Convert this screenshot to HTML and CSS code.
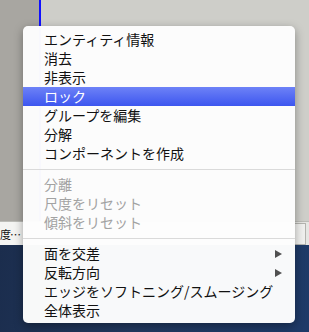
FILE: index.html
```html
<html>
	<head>
		<meta charset="UTF-8">
		<link rel="stylesheet" href="styles.css">
	</head>
	<body>
		<div class="desk">
			<div class="top">
				<div class="stone"></div>
				<div class="guide"></div>
				<div class="canvas"></div>
			</div>
			<div class="status">
				<div class="hint">度…</div>
				<div class="status-fill"></div>
				<div class="status-box"></div>
			</div>
			<div class="sea"></div>
		</div>
		<ul class="menu">
			<li>エンティティ情報</li>
			<li>消去</li>
			<li>非表示</li>
			<li class="sel">ロック</li>
			<li>グループを編集</li>
			<li>分解</li>
			<li>コンポーネントを作成</li>
			<li class="sep"></li>
			<li class="off">分離</li>
			<li class="off">尺度をリセット</li>
			<li class="off">傾斜をリセット</li>
			<li class="sep"></li>
			<li>面を交差<span class="arrow"></span></li>
			<li>反転方向<span class="arrow"></span></li>
			<li>エッジをソフトニング/スムージング</li>
			<li>全体表示</li>
		</ul>
	</body>
</html>
```

FILE: styles.css
```css
body {
	margin: 0;
	width: 309px;
	height: 332px;
	overflow: hidden;
	font-family: "Noto Sans CJK JP", "Noto Sans", sans-serif;
}
.desk {
	display: flex;
	flex-direction: column;
	height: 332px;
}
.top {
	display: flex;
	height: 221px;
}
.stone {
	width: 39px;
	background: #a8a6a1;
}
.guide {
	width: 2px;
	background: #1010ff;
}
.canvas {
	flex: 1;
	background: #cecec9;
}
.status {
	display: flex;
	height: 24px;
	background: #e6e6e3;
	border-top: 1px solid #bcbcb7;
	box-sizing: border-box;
}
.hint {
	width: 23px;
	display: flex;
	align-items: center;
	background: #f4f4f2;
	font-size: 11px;
	color: #111;
	white-space: nowrap;
	letter-spacing: -1px;
}
.status-fill {
	flex: 1;
}
.status-box {
	width: 10px;
	margin: 1px 3px 0 0;
	background: #f0f0ee;
	border: 1px solid #b4b4af;
}
.sea {
	flex: 1;
	background: linear-gradient(100deg, #1b2d4d, #22395f 45%, #1e3a68);
}
.menu {
	position: absolute;
	left: 23px;
	top: 26px;
	width: 272px;
	margin: 0;
	padding: 4px 0 3px;
	list-style: none;
	background: rgba(253, 253, 253, 0.98);
	border-radius: 5px;
	box-shadow: 0 3px 10px rgba(0, 0, 0, 0.35);
	font-size: 14px;
	color: #111;
}
.menu li {
	display: flex;
	justify-content: space-between;
	align-items: center;
	height: 19px;
	line-height: 19px;
	padding: 0 13px 0 21px;
	white-space: nowrap;
}
.menu .sel {
	background: linear-gradient(#6d82f7, #3d56ef);
	color: #fff;
}
.menu .off {
	color: #a2a2a2;
}
.menu .sep {
	display: block;
	height: 6px;
	padding: 6px 0 0;
}
.menu .sep:before {
	content: "";
	display: block;
	height: 1px;
	background: #dadada;
}
.arrow {
	width: 0;
	height: 0;
	border-left: 7px solid #505050;
	border-top: 4px solid transparent;
	border-bottom: 4px solid transparent;
}
```
